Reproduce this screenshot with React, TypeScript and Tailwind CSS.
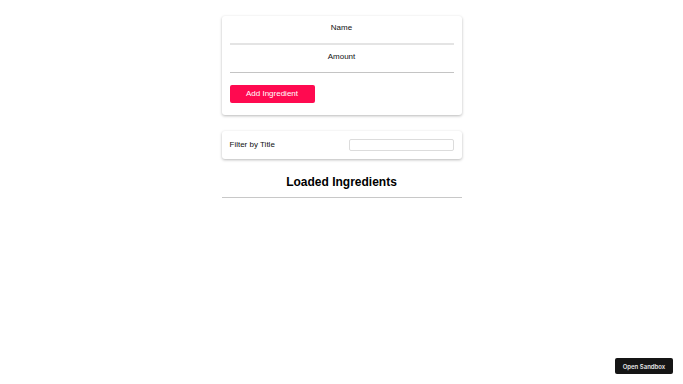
import React, { useState } from 'react';

function IngredientForm() {
  const [title, setTitle] = useState('');
  const [amount, setAmount] = useState('');

  return (
    <section className="rounded-[3px] bg-white shadow-[0_1px_3px_rgba(0,0,0,0.28)] px-[8px] pt-[7px] pb-[12px]">
      <form onSubmit={e => e.preventDefault()} className="flex flex-col">
        <div className="flex flex-col mb-[7px]">
          <label htmlFor="title" className="block text-center text-[8px] leading-[10px] text-[#111]">Name</label>
          <input
            id="title"
            value={title}
            onChange={e => setTitle(e.target.value)}
            className="h-[12px] w-full bg-transparent text-[8px] outline-none border-b-2 border-[#e4e4e4]"
          />
        </div>
        <div className="flex flex-col">
          <label htmlFor="amount" className="block text-center text-[8px] leading-[10px] text-[#111]">Amount</label>
          <input
            id="amount"
            type="number"
            value={amount}
            onChange={e => setAmount(e.target.value)}
            className="h-[11px] w-full bg-transparent text-[8px] outline-none border-b border-[#c4c4c4]"
          />
        </div>
        <div className="mt-[12px] flex">
          <button
            type="submit"
            className="h-[18px] w-[85px] rounded-[2px] bg-[#ff0a50] text-[8px] text-white"
          >
            Add Ingredient
          </button>
        </div>
      </form>
    </section>
  );
}

function Search() {
  const [filter, setFilter] = useState('');
  return (
    <section className="mt-[16px] flex h-[28px] items-center justify-between rounded-[3px] bg-white px-[8px] shadow-[0_1px_3px_rgba(0,0,0,0.28)]">
      <label className="text-[8px] text-[#111]">Filter by Title</label>
      <input
        type="text"
        value={filter}
        onChange={e => setFilter(e.target.value)}
        className="h-[12px] w-[105px] rounded-[2px] border border-[#dcdcdc] text-[8px] outline-none"
      />
    </section>
  );
}

function IngredientList() {
  return (
    <section className="mt-[16px] border-b border-[#c8c8c8] pb-[8px]">
      <h2 className="text-center text-[12px] font-bold leading-[14px] text-black">Loaded Ingredients</h2>
    </section>
  );
}

export default function App() {
  return (
    <div className="min-h-screen bg-white font-['Liberation_Sans',Arial,sans-serif]">
      <div className="mx-auto w-[240px] pt-[16px]">
        <IngredientForm />
        <Search />
        <IngredientList />
      </div>
      <button className="fixed bottom-[10px] right-[10px] h-[16px] w-[58px] rounded-[2px] bg-[#151515] font-['Inter',sans-serif] text-[6px] font-semibold text-[#e8e8e8]">
        Open Sandbox
      </button>
    </div>
  );
}
